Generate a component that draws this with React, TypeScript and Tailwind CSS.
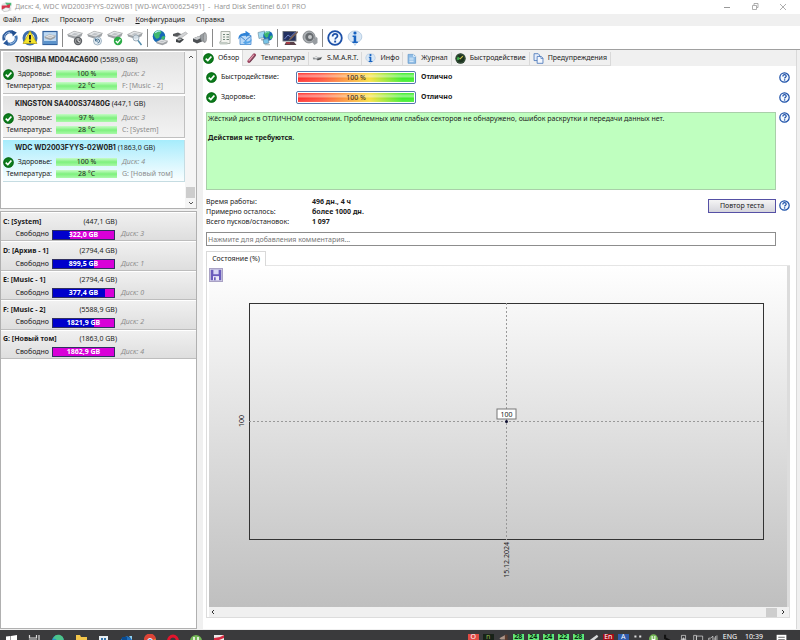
import type { ReactNode } from "react";

const disks = [
  { name: "TOSHIBA MD04ACA600", size: "5589,0 GB", health: "100 %", temp: "22 °C", index: 2, volume: "F: [Music - 2]", active: false },
  { name: "KINGSTON SA400S37480G", size: "447,1 GB", health: "97 %", temp: "28 °C", index: 3, volume: "C: [System]", active: false },
  { name: "WDC WD2003FYYS-02W0B1", size: "1863,0 GB", health: "100 %", temp: "28 °C", index: 4, volume: "G: [Новый том]", active: true },
];

const volumes = [
  { name: "C: [System]", size: "447,1 GB", free: "322,0 GB", used: 28, disk: 3 },
  { name: "D: [Архив - 1]", size: "2794,4 GB", free: "899,5 GB", used: 68, disk: 1 },
  { name: "E: [Music - 1]", size: "2794,4 GB", free: "377,4 GB", used: 86, disk: 0 },
  { name: "F: [Music - 2]", size: "5588,9 GB", free: "1821,9 GB", used: 67, disk: 2 },
  { name: "G: [Новый том]", size: "1863,0 GB", free: "1862,9 GB", used: 0, disk: 4 },
];

const Svg = ({ children, className = "size-4" }: { children: ReactNode; className?: string }) => (
  <svg viewBox="0 0 16 16" className={`${className} shrink-0`} fill="none" aria-hidden="true">
    {children}
  </svg>
);

const Check = () => (
  <Svg className="size-[11px]">
    <circle cx="8" cy="8" r="7.6" fill="#0c7d1c" />
    <circle cx="8" cy="8" r="6.8" stroke="#075c11" strokeWidth="1" />
    <path d="M4 8.2 7 11l5.2-6" stroke="#fff" strokeWidth="2.4" />
  </Svg>
);

const Help = ({ className = "size-[11px]" }: { className?: string }) => (
  <Svg className={className}>
    <circle cx="8" cy="8" r="6.8" fill="#f4f9ff" stroke="#1c50a8" strokeWidth="1.8" />
    <path d="M5.6 6.4c0-1.6 1-2.5 2.5-2.5s2.4.9 2.4 2.1c0 1.7-2.3 1.7-2.3 3.5" stroke="#1c50a8" strokeWidth="1.7" />
    <rect x="7.2" y="10.6" width="1.9" height="1.9" fill="#1c50a8" />
  </Svg>
);

const Info = ({ className = "size-4" }: { className?: string }) => (
  <Svg className={className}>
    <path d="M8 1a6.5 5.8 0 0 1 2 11.4L8 15.4l-2-3A6.5 5.8 0 0 1 8 1z" fill="#d9e8f6" stroke="#a3bdd8" strokeWidth=".7" />
    <circle cx="8" cy="3" r="1.6" fill="#1762c0" />
    <path d="M5.600 5.500h3.600v6h1.600v1.500H5.400v-1.500h1.300V7H5.600z" fill="#1762c0" />
  </Svg>
);

// grey drive body shared by most toolbar icons
const Platter = () => (
  <>
    <path d="M.5 4.5 7 1.2l8.500 2-1 3-6 2.800-7.500-2.500z" fill="#9fa3a7" />
    <path d="M.5 4.5 7 1.2l8.500 2-7 3.500z" fill="#e3e5e7" stroke="#8f8f8f" strokeWidth=".4" />
    <path d="M4.500 4.400 7.500 3l4 .8-3.200 1.600z" fill="#bfc3c7" />
  </>
);

const Globe = ({ x, y, r }: { x: number; y: number; r: number }) => (
  <g transform={`translate(${x} ${y}) scale(${r / 5})`}>
    <circle r="5" fill="#1669b6" />
    <path d="M-3.9-3C-2-5.5 1.5-5.3 2-3.6c0 1.5-2 1.5-1.5 3S-1.800 2.400-2.500 1.400-4.700-1-3.900-3zM2.500 0c1-.8 2.300-.6 2.300.4S3.500 3.800 2.500 3.400 1.600.8 2.500 0z" fill="#3fb86d" />
    <path d="M-3-3C-1.500-4.700.500-4.600 1-4" stroke="#b7ebf7" strokeWidth="1" />
  </g>
);

const Refresh = () => (
  <Svg>
    <path d="M2.200 10.200A6.200 6.200 0 0 1 11.500 3" stroke="#315e9e" strokeWidth="2.900" />
    <path d="m9.500 0 5.300 2.500-4 4z" fill="#23508f" />
    <path d="M13.800 5.800A6.200 6.200 0 0 1 4.500 13" stroke="#4678b5" strokeWidth="2.900" />
    <path d="m6.500 16-5.300-2.500 4-4z" fill="#2b5a9c" />
    <path d="M2.500 7.500A5.600 5.600 0 0 1 8 2.400M13.500 8.500A5.600 5.600 0 0 1 8 13.600" stroke="#a9c7e6" strokeWidth=".8" />
  </Svg>
);

const RefreshWarning = () => (
  <Svg>
    <circle cx="8" cy="8" r="6" stroke="#3c6dac" strokeWidth="3" />
    <path d="m8 1 7 12.500H1z" fill="#f5e52b" stroke="#b09a10" strokeWidth=".7" />
    <path d="M8 5v4.500" stroke="#222" strokeWidth="2" />
    <circle cx="8" cy="11.500" r="1.100" fill="#222" />
  </Svg>
);

const DiskFrame = () => (
  <Svg>
    <rect x="1" y="1.500" width="14" height="13" fill="#bcd8f2" stroke="#31619e" strokeWidth="1.200" />
    <path d="M1.600 11h12.800v3H1.600z" fill="#5c93cb" />
    <g transform="translate(2.200 3.500) scale(.74)"><Platter /></g>
  </Svg>
);

const DiskClock = () => (
  <Svg>
    <Platter />
    <circle cx="11" cy="11" r="4.200" fill="#5d6165" />
    <circle cx="11" cy="11" r="2.600" stroke="#aaa" strokeWidth=".8" />
    <path d="M11 8.500V11l2 1" stroke="#eee" strokeWidth="1" />
  </Svg>
);

const DiskRefresh = () => (
  <Svg>
    <Platter />
    <circle cx="10.500" cy="11" r="4" fill="#e3edf4" stroke="#8fa5b5" strokeWidth=".8" />
    <path d="M8.500 11a2 2 0 1 1 2 2M8.500 8.500V11H11" stroke="#47708f" strokeWidth="1" />
  </Svg>
);

const DiskCheck = () => (
  <Svg>
    <Platter />
    <circle cx="11" cy="11" r="4.200" fill="#2bac46" />
    <path d="m8.800 11 1.800 1.800 2.800-3.500" stroke="#fff" strokeWidth="1.300" />
  </Svg>
);

const DiskSearch = () => (
  <Svg>
    <Platter />
    <circle cx="9" cy="8" r="3" fill="#dfeaf2" fillOpacity=".8" stroke="#9aa9b5" strokeWidth=".9" />
    <path d="m11 10.500 3.500 4.500" stroke="#548cab" strokeWidth="1.500" />
  </Svg>
);

const GlobeDisk = () => (
  <Svg>
    <Globe x={7} y={6.500} r={6.300} />
    <g transform="translate(4 8.500) scale(.76)"><Platter /></g>
  </Svg>
);

const DiskDark = () => (
  <Svg>
    <path d="m1 4 5-1.500 4 2-4 2.500-5-1z" fill="#55585b" />
    <path d="M5 6.500 13.500 2l2 1.500-7 5z" fill="#d2d4d6" stroke="#888" strokeWidth=".4" />
    <path d="m4 9.500 4-2 4 2-4 3.500-4-1z" fill="#3e4245" />
    <path d="m5 9.500 3-1.300 2 1-3 1.600z" fill="#b7babd" />
  </Svg>
);

const DiskSpeaker = () => (
  <Svg>
    <path d="m1 8.500 6-2.500 3 1.500v4L5 13.500l-4-2z" fill="#4c5054" />
    <path d="m1 8.500 6-2.500 3 1.500L5 10z" fill="#c9ccce" />
    <path d="m8 5.500 5-3v10l-4-2z" fill="#989da1" stroke="#6a6e71" strokeWidth=".5" />
    <ellipse cx="13" cy="7.500" rx="1.600" ry="4.800" fill="#aeb2b5" stroke="#777" strokeWidth=".5" />
  </Svg>
);

const Report = () => (
  <Svg>
    <path d="M4 1.500h9v12H3v-2h1z" fill="#f2f3ee" stroke="#a4aaa3" strokeWidth=".9" />
    <path d="M6 4.500h2M9.500 4.500H12M6 7h2M9.500 7H12M6 9.500h2M9.500 9.500H12" stroke="#71867a" strokeWidth="1" />
    <path d="M2 12h8.500v2.500H3z" fill="#c3cbc4" />
  </Svg>
);

const Send = () => (
  <Svg>
    <path d="M3 5.500h11v9H3z" fill="#b9d9f7" stroke="#4488cf" strokeWidth=".8" />
    <path d="m3 6 5.500 4.500L14 6" stroke="#4488cf" />
    <path d="M1.500 9.500C1 5 4.500 3 8.500 3V.800L13.500 4 9 7V5.200C6 5 3.500 6 1.500 9.500z" fill="#2f83d7" />
    <path d="M14.500 9c.500 3-2 4.500-5 4.500v1.800L6 12.500l3.500-2.500v1.500c2 0 3.500-.5 5-2.500z" fill="#55a4e8" />
  </Svg>
);

const Network = () => (
  <Svg>
    <path d="M1 2.500 7.500 1l1 6L2 8.500z" fill="#9fdaf2" stroke="#7797a8" strokeWidth=".7" />
    <path d="M4 8.500h4l1 2H4z" fill="#b6bcc0" />
    <Globe x={11} y={6} r={4.800} />
    <path d="m6 9.500 5-1 1 4.500-5 1z" fill="#79c4e7" stroke="#63889c" strokeWidth=".7" />
    <path d="M8 14h5v1.300H8z" fill="#b6bcc0" />
  </Svg>
);

const Monitor = () => (
  <Svg>
    <rect x="1" y="1.500" width="13" height="9.500" fill="#22305f" stroke="#6b6f75" strokeWidth=".9" />
    <path d="m2.500 9 3.500-4 2.500 2 5-5" stroke="#7f91d4" strokeWidth=".9" />
    <path d="M15.500 1 8 8l-2 2.800L9 9.500l7-7z" fill="#7b6255" />
    <path d="M4 12h8l2.500 3h-12z" fill="#594049" />
    <path d="M4 13h4" stroke="#cc3b43" strokeWidth="1.300" />
  </Svg>
);

const Speaker = () => (
  <Svg>
    <circle cx="7" cy="7" r="6" fill="#aaaeb2" stroke="#777c80" strokeWidth=".8" />
    <circle cx="7.500" cy="7" r="4.200" fill="#676c70" />
    <circle cx="8" cy="7" r="2" fill="#c6c9cb" />
    <path d="M9.500 11.500c2.500-.5 4-2.500 4-5l2 1.500v5l-3 2z" fill="#989da2" />
  </Svg>
);

const toolbar: { label: string; icon: ReactNode }[][] = [
  [
    { label: "Обновить", icon: <Refresh /> },
    { label: "Проверить", icon: <RefreshWarning /> },
    { label: "Диски", icon: <DiskFrame /> },
  ],
  [
    { label: "Короткий тест", icon: <DiskClock /> },
    { label: "Расширенный тест", icon: <DiskRefresh /> },
    { label: "Тест поверхности", icon: <DiskCheck /> },
    { label: "Поиск", icon: <DiskSearch /> },
  ],
  [
    { label: "Сайт", icon: <GlobeDisk /> },
    { label: "Питание", icon: <DiskDark /> },
    { label: "Шум", icon: <DiskSpeaker /> },
  ],
  [
    { label: "Отчёт", icon: <Report /> },
    { label: "Отправить отчёт", icon: <Send /> },
    { label: "Сеть", icon: <Network /> },
  ],
  [
    { label: "Настройки", icon: <Monitor /> },
    { label: "Звук", icon: <Speaker /> },
  ],
  [
    { label: "Справка", icon: <Help className="size-4" /> },
    { label: "О программе", icon: <Info /> },
  ],
];

const tabs: { label: string; icon: ReactNode }[] = [
  {
    label: "Температура",
    icon: (
      <Svg className="size-[11px]">
        <path d="M12 3 4.500 12" stroke="#9b4560" strokeWidth="5" strokeLinecap="round" />
        <path d="M11.500 2.500 4 11.500" stroke="#e5a7b8" strokeWidth="1.500" />
        <path d="M13.500 3.500 6 13" stroke="#5b4a55" strokeWidth="1" />
      </Svg>
    ),
  },
  {
    label: "S.M.A.R.T.",
    icon: (
      <Svg className="size-[11px]">
        <path d="M1 7 6 5l4 1.500 5-1-2 4-5 1.500-2-2-4 .5z" fill="#8b8f92" />
        <path d="m2 7 4-1.500L9 7l-3 1z" fill="#e6e7e8" />
        <path d="m8 9.500 5-1.500" stroke="#333" strokeWidth="1.300" />
      </Svg>
    ),
  },
  { label: "Инфо", icon: <Info className="size-[11px]" /> },
  {
    label: "Журнал",
    icon: (
      <Svg className="size-[11px]">
        <path d="M3 2h8l3 3v10H3z" fill="#8fbde6" stroke="#5b93c9" />
        <path d="M11 2v3h3" stroke="#fff" />
        <path d="M5 7.500h6M5 10h6M5 12.500h6" stroke="#e8f3fc" strokeWidth="1.200" />
      </Svg>
    ),
  },
  {
    label: "Быстродействие",
    icon: (
      <Svg className="size-[11px]">
        <circle cx="8" cy="8" r="7.500" fill="#1d3420" />
        <path d="M4 11a5 5 0 0 1 0-6l4 3z" fill="#3fae4d" />
        <path d="m7 9 4.500-4.500" stroke="#d7c84e" strokeWidth="1.500" />
        <circle cx="8" cy="8" r="6.300" stroke="#4c6650" strokeWidth=".8" />
      </Svg>
    ),
  },
  {
    label: "Предупреждения",
    icon: (
      <Svg className="size-[11px]">
        <path d="M1.500 1h6l2 2v8h-8z" fill="#e6eefb" stroke="#4874b8" strokeWidth="1.200" />
        <path d="M6 5h6l2.500 2.500V15H6z" fill="#f3f7fe" stroke="#4874b8" strokeWidth="1.200" />
        <path d="M11.500 5v3h3" stroke="#4874b8" />
      </Svg>
    ),
  },
];

const TitleBar = () => (
  <header className="flex h-[14px] shrink-0 items-center bg-white pl-px text-[#979797]">
    <Svg className="size-[11px]">
      <path d="M1 3 8 0l7 4v9H1z" fill="#e2e4e4" />
      <path d="M6 1h9v4H9z" fill="#4fb87a" />
      <path d="M1 5h7l5-2v5L7 11H1z" fill="#d9344a" />
      <path d="m2 11 5-3 6 1-2 4-7 1z" fill="#f5f5f5" stroke="#999" strokeWidth=".6" />
    </Svg>
    <h1 className="ml-[3px] flex-1 whitespace-pre">Диск: 4, WDC WD2003FYYS-02W0B1 [WD-WCAY00625491]  -  Hard Disk Sentinel 6.01 PRO</h1>
    <button aria-label="Свернуть" className="flex w-7 justify-center">
      <svg viewBox="0 0 8 8" className="size-2" fill="none" stroke="#999"><path d="M1 4.500h6" /></svg>
    </button>
    <button aria-label="Развернуть" className="flex w-7 justify-center">
      <svg viewBox="0 0 8 8" className="size-2" fill="none" stroke="#999"><path d="M1.500 2.500h4v4h-4zM3 2V.500h4v4H6" strokeWidth=".8" /></svg>
    </button>
    <button aria-label="Закрыть" className="mr-[3px] flex w-7 justify-center">
      <svg viewBox="0 0 8 8" className="size-2" fill="none" stroke="#999"><path d="m1 1 6 6M7 1 1 7" strokeWidth=".8" /></svg>
    </button>
  </header>
);

const Menu = () => (
  <nav className="flex h-3 shrink-0 items-center gap-[11px] bg-[#f0f0f0] pl-[3px] leading-3">
    <button>Файл</button>
    <button>Диск</button>
    <button>Просмотр</button>
    <button>Отчёт</button>
    <button><u>К</u>онфигурация</button>
    <button>Справка</button>
  </nav>
);

const Toolbar = () => (
  <div className="flex h-6 shrink-0 items-center border-b border-[#a0a0a0] bg-white">
    {toolbar.map((group, i) => (
      <div key={i} className="flex items-center">
        {i > 0 && (
          <div className="flex w-[5px] justify-center">
            <span className="h-[18px] w-px bg-[#8a8a8a]" />
          </div>
        )}
        {group.map((item) => (
          <button key={item.label} aria-label={item.label} className="flex w-5 justify-center">
            {item.icon}
          </button>
        ))}
      </div>
    ))}
  </div>
);

const greenBar = "h-2 w-[61px] bg-linear-to-b from-[#c6fcc6] via-[#7df07d] to-[#a9f9a9] text-center leading-2";

const DiskList = () => (
  <section className="flex h-[159px] shrink-0 border border-[#b0b0b0] bg-white">
    <div className="flex min-w-0 flex-1 flex-col gap-0.5 pt-px pl-0.5">
      {disks.map((d) => (
        <article
          key={d.name}
          className={`h-[42px] shrink-0 border-r border-b pt-0.5 whitespace-nowrap ${
            d.active
              ? "border-[#c5dce2] bg-linear-to-b from-[#a6ecfc] to-[#fafeff]"
              : "border-[#c0c0c0] bg-linear-to-b from-[#e2e2e2] to-[#f3f3f3]"
          }`}
        >
          <h2 className="h-3 pl-3 leading-[11px]">
            <b className="font-['Inter',sans-serif]">{d.name}</b> ({d.size})
          </h2>
          <div className="flex h-4 items-center">
            <Check />
            <span className="w-[39px] pr-px text-right">Здоровье:</span>
            <span className={`ml-[3px] ${greenBar}`}>{d.health}</span>
            <i className="ml-[5px] text-[#8c8c8c]">Диск: {d.index}</i>
          </div>
          <div className="flex h-2 items-center">
            <span className="w-[50px] pr-px text-right">Температура:</span>
            <span className={`ml-[3px] ${greenBar}`}>{d.temp}</span>
            <span className="ml-[5px] text-[#8c8c8c]">{d.volume}</span>
          </div>
        </article>
      ))}
    </div>
    <div className="flex w-[11px] flex-col items-center bg-[#f5f5f5]">
      <svg viewBox="0 0 8 8" className="mt-0.5 size-2" fill="none" stroke="#555"><path d="m2 5 2-2 2 2" /></svg>
      <span className="mt-auto h-[11px] w-[9px] bg-[#cdcdcd]" />
      <svg viewBox="0 0 8 8" className="my-px size-2" fill="none" stroke="#555"><path d="m2 3 2 2 2-2" /></svg>
    </div>
  </section>
);

const VolumeList = () => (
  <section className="mt-0.5 flex-1 border border-[#b0b0b0] bg-white">
    <div className="grid h-[147px] grid-rows-5">
      {volumes.map((v) => (
        <article key={v.name} className="border-b border-[#bdbdbd] bg-linear-to-b from-[#f1f1f1] to-[#dedede] pt-0.5 pl-0.5 shadow-[inset_0_1px_0_#fff]">
          <h2 className="flex h-[15px] items-center leading-3">
            <b className="flex-1">{v.name}</b>
            <span className="mr-[79px]">({v.size})</span>
          </h2>
          <div className="flex h-[11px] items-center">
            <span className="w-[46px] text-right">Свободно</span>
            <div className="relative ml-[3px] h-[10px] w-[63px] border border-[#303060] bg-[#d800d8]">
              <div className="h-full bg-[#0000cc]" style={{ width: `${v.used}%` }} />
              <b className="absolute inset-0 text-center leading-2 text-white">{v.free}</b>
            </div>
            <i className="ml-[6px] text-[#8c8c8c]">Диск: {v.disk}</i>
          </div>
        </article>
      ))}
    </div>
  </section>
);

const Tabs = () => (
  <div role="tablist" className="flex h-4 shrink-0 items-end bg-[#f0f0f0]">
    <button role="tab" aria-selected="true" className="flex h-4 w-[40px] items-center gap-1 border-r border-[#d9d9d9] bg-white">
      <Check />
      Обзор
    </button>
    {tabs.map((t) => (
      <button key={t.label} role="tab" aria-selected="false" className="flex h-[14px] items-center gap-1 border-r border-b border-[#d9d9d9] px-[3px]">
        {t.icon}
        {t.label}
      </button>
    ))}
  </div>
);

const Rating = ({ label }: { label: string }) => (
  <div className="flex h-5 items-center">
    <Check />
    <span className="w-[79px] pl-1">{label}</span>
    <div className="h-[13px] w-[120px] rounded-xs border border-[#5577ad] bg-white p-px">
      <div className="h-full bg-[linear-gradient(180deg,#fff0,#fff7_35%,#fff0_60%,#fff2),linear-gradient(90deg,#ff3030,#ff5540_20%,#f7e040_62%,#40ee30_90%)] text-center leading-[9px]">
        100 %
      </div>
    </div>
    <b className="ml-[5px]">Отлично</b>
    <button aria-label="Справка" className="mr-0.5 ml-auto">
      <Help />
    </button>
  </div>
);

const Chart = () => (
  <div className="flex min-h-0 flex-1 flex-col border-r-2 border-[#dcdcdc] bg-linear-to-b from-white to-[#bfbfbf]">
    <button aria-label="Сохранить" className="mt-0.5 flex size-[14px] shrink-0 items-center justify-center border border-[#a9a2c4] bg-[#d8d5e6]">
      <Svg className="size-3">
        <path d="M1 1h14v14H1z" fill="#6a5cbc" />
        <path d="M4.500 1h7v6h-7z" fill="#d9d8f5" />
        <path d="M4 9.500h8V15H4z" fill="#eceaf8" />
        <path d="M5.500 11h2v4h-2z" fill="#5b4cb4" />
      </Svg>
    </button>
    <div className="mt-[21px] flex min-h-0 flex-1 pr-[23px]">
      <div className="flex w-10 items-center justify-end pr-[3px]">
        <span className="rotate-180 leading-2 [writing-mode:vertical-rl]">100</span>
      </div>
      <svg className="h-full min-w-0 flex-1" role="img" aria-label="Состояние, 15.12.2024: 100 %">
        <rect width="100%" height="100%" fill="none" stroke="#333" strokeWidth="2" />
        <line x1="50%" y1="0" x2="50%" y2="100%" stroke="#999" strokeDasharray="2 2" />
        <line x1="0" y1="50%" x2="100%" y2="50%" stroke="#999" strokeDasharray="2 2" />
        <circle cx="50%" cy="50%" r="1.500" fill="#113" />
        <svg x="50%" y="50%" overflow="visible">
          <rect x="-9.500" y="-12.500" width="19" height="10" fill="#fff" stroke="#777" />
          <text y="-5" textAnchor="middle" fill="#222">100</text>
        </svg>
      </svg>
    </div>
    <div className="flex h-[67px] shrink-0 justify-center pt-0.5 pr-[23px] pl-10">
      <span className="rotate-180 self-start leading-2 [writing-mode:vertical-rl]">15.12.2024</span>
    </div>
  </div>
);

const Overview = () => (
  <main className="flex min-w-0 flex-1 flex-col border-r border-[#d9d9d9] bg-white">
    <Tabs />
    <div className="flex min-h-0 flex-1 flex-col pr-1 pl-[3px]">
      <div className="pt-px">
        <Rating label="Быстродействие:" />
        <Rating label="Здоровье:" />
      </div>
      <div className="mt-[5px] flex items-start">
        <div className="h-[78px] flex-1 border border-[#a9cfa9] bg-[#bfffbf] pt-px pl-px leading-[10px]">
          <p>Жёсткий диск в ОТЛИЧНОМ состоянии. Проблемных или слабых секторов не обнаружено, ошибок раскрутки и передачи данных нет.</p>
          <p className="mt-[9px] font-bold">Действия не требуются.</p>
        </div>
        <button aria-label="Справка" className="mr-0.5 ml-[3px]">
          <Help />
        </button>
      </div>
      <div className="mt-[7px] flex items-start">
        <dl className="grid flex-1 grid-cols-[106px_1fr] leading-[10px]">
          <dt>Время работы:</dt>
          <dd className="font-bold">496 дн., 4 ч</dd>
          <dt>Примерно осталось:</dt>
          <dd className="font-bold">более 1000 дн.</dd>
          <dt>Всего пусков/остановок:</dt>
          <dd className="font-bold">1 097</dd>
        </dl>
        <button className="mt-0.5 h-[14px] w-[68px] border border-[#5550a5] bg-linear-to-b from-[#f5f5f5] to-[#d5d5dc]">Повтор теста</button>
        <button aria-label="Справка" className="mt-[3px] mr-0.5 ml-[3px]">
          <Help />
        </button>
      </div>
      <input
        aria-label="Комментарий"
        placeholder="Нажмите для добавления комментария..."
        className="mt-[5px] mr-4 h-[14px] shrink-0 border border-[#8d8d8d] px-px placeholder:text-[#777]"
      />
      <div className="mt-[5px] mr-0.5 flex h-[15px] shrink-0">
        <button role="tab" aria-selected="true" className="w-[60px] border border-b-0 border-[#d9d9d9]">Состояние (%)</button>
        <span className="flex-1 border-b border-[#e5e5e5]" />
      </div>
      <div className="mr-0.5 mb-[11px] flex min-h-0 flex-1 flex-col border border-t-0 border-[#dcdcdc] pl-0.5">
        <Chart />
        <div className="flex h-[10px] shrink-0 items-center bg-[#f0f0f0]">
          <svg viewBox="0 0 8 8" className="size-2" fill="none" stroke="#333"><path d="M5 2 3 4l2 2" /></svg>
          <span className="ml-auto h-[9px] w-[11px] bg-[#cdcdcd]" />
          <svg viewBox="0 0 8 8" className="mx-0.5 size-2" fill="none" stroke="#333"><path d="m3 2 2 2-2 2" /></svg>
        </div>
      </div>
    </div>
  </main>
);

const TrayTemp = ({ value }: { value: string }) => (
  <span className="w-[11px] shrink-0 bg-[#62e878] text-center leading-[6px] font-bold text-[#0b2a10]">{value}</span>
);

const Taskbar = () => (
  <footer className="flex h-[10px] shrink-0 items-start bg-[#3a3a3c] pt-1">
    <div className="flex gap-[7px] pl-[3px]">
      <Svg><path d="M3 2.500 7.500 2v5.500H3zM8 1.900 14 1v6.500H8zM3 8h11v6H3z" fill="#fff" /></Svg>
      <Svg><path d="M3.500 1v3h7V1M3.500 6h7v6h-7zM13 1v12" stroke="#ddd" strokeWidth="1.200" /></Svg>
      <Svg><circle cx="9" cy="7" r="6" fill="#2497c9" /><path d="M8 1c5-1 8 4 6 7H8c0-3-2-4-4-3 1-2 2-4 4-4z" fill="#4cc48a" /></Svg>
      <Svg><path d="M4 1h4l1 2h6v10H4z" fill="#f3c64b" /><path d="M8 6h7v7H8z" fill="#498fd1" /></Svg>
      <Svg><path d="M4 2h9v11H4z" fill="#e8eef2" /><path d="M6 4h2v2H6zM9 4h2v2H9z" fill="#3475ad" /></Svg>
      <Svg><path d="m3 5 6-3 5 3v8H3z" fill="#1d6fc0" /><path d="M4 3h5v5H4z" fill="#0a4b91" /><path d="M11 2h3v4z" fill="#8ed2f5" /></Svg>
      <Svg><circle cx="9" cy="7" r="6" fill="#e3b52b" /><path d="M3 6A6 6 0 0 1 15 5L9 7z" fill="#dc4437" /><circle cx="9" cy="7" r="2.500" fill="#438be8" stroke="#fff" /></Svg>
      <Svg><ellipse cx="9" cy="7" rx="4.500" ry="5" stroke="#e2152d" strokeWidth="3" /></Svg>
      <Svg><circle cx="9" cy="7" r="6" fill="#72b655" /><path d="M7 3v5c0 2 4 2 4 0V3" stroke="#fff" strokeWidth="1.500" /></Svg>
      <Svg><path d="M4 1h10v12H4z" fill="#eceaea" /><path d="m4 4 6-1 4-2v3l-5 2H4z" fill="#d62b42" /></Svg>
    </div>
    <div className="ml-auto flex items-start gap-1 leading-[6px] text-white">
      <span className="w-[11px] bg-[#e04a44] text-center">O</span>
      <span className="w-[11px] bg-[#182218] text-center text-[#8fb54c]">n</span>
      <Svg className="size-[11px]"><path d="M2 6 11 1v7H4z" fill="#ac9588" /><path d="M10 1h4v8h-4z" fill="#5b3b2d" /></Svg>
      <TrayTemp value="28" />
      <TrayTemp value="24" />
      <TrayTemp value="24" />
      <TrayTemp value="22" />
      <TrayTemp value="28" />
      <Svg className="size-[11px]"><path d="M1 10 13 1l2 3L5 12z" fill="#d7d9da" /></Svg>
      <span className="w-[11px] bg-[#a50d16] text-center">En</span>
      <span className="w-[11px] bg-[#2f5cae] text-center">A</span>
      <Svg className="size-[11px]"><path d="M2 2h3v3H2zM9 2h3v3H9zM2 9h3v3H2zM9 9h3v3H9z" fill="#ddd" /></Svg>
      <Svg className="size-[11px]"><circle cx="8" cy="7" r="6.500" fill="#76b957" /><path d="M6 3v5h4V3" stroke="#fff" strokeWidth="1.500" /></Svg>
      <Svg className="size-[11px]"><path d="M3 1v5l9 5" stroke="#111" strokeWidth="3" /></Svg>
      <Svg className="size-[11px]"><path d="M5 2h6v5H5zM4 8h8M8 5v8" stroke="#ddd" /></Svg>
      <Svg className="size-[11px]"><path d="M1 2h4v9H1zM5 3h9v7H5z" stroke="#ddd" /></Svg>
      <Svg className="size-[11px]"><path d="M1 6h3l3-3v9L4 9H1zM9 5v4M11 3v8M13 2v9" stroke="#ddd" /></Svg>
      <span>ENG</span>
      <span className="ml-1">10:39</span>
      <Svg className="ml-2 size-[13px]"><path d="M2 1h12v11H2z" fill="#fff" /><path d="M4 4h8M4 7h8" stroke="#444" /></Svg>
      <span className="w-2" />
    </div>
  </footer>
);

const App = () => (
  <div className="flex h-screen flex-col overflow-hidden bg-[#f0f0f0] font-['Noto_Sans',sans-serif] text-[7px] text-[#1c1c1c]">
    <TitleBar />
    <Menu />
    <Toolbar />
    <div className="flex min-h-0 flex-1 pb-px">
      <aside className="flex w-[197px] shrink-0 flex-col">
        <DiskList />
        <VolumeList />
      </aside>
      <div className="flex min-w-0 flex-1 pr-[3px] pl-1.5">
        <Overview />
      </div>
    </div>
    <Taskbar />
  </div>
);

export default App;
